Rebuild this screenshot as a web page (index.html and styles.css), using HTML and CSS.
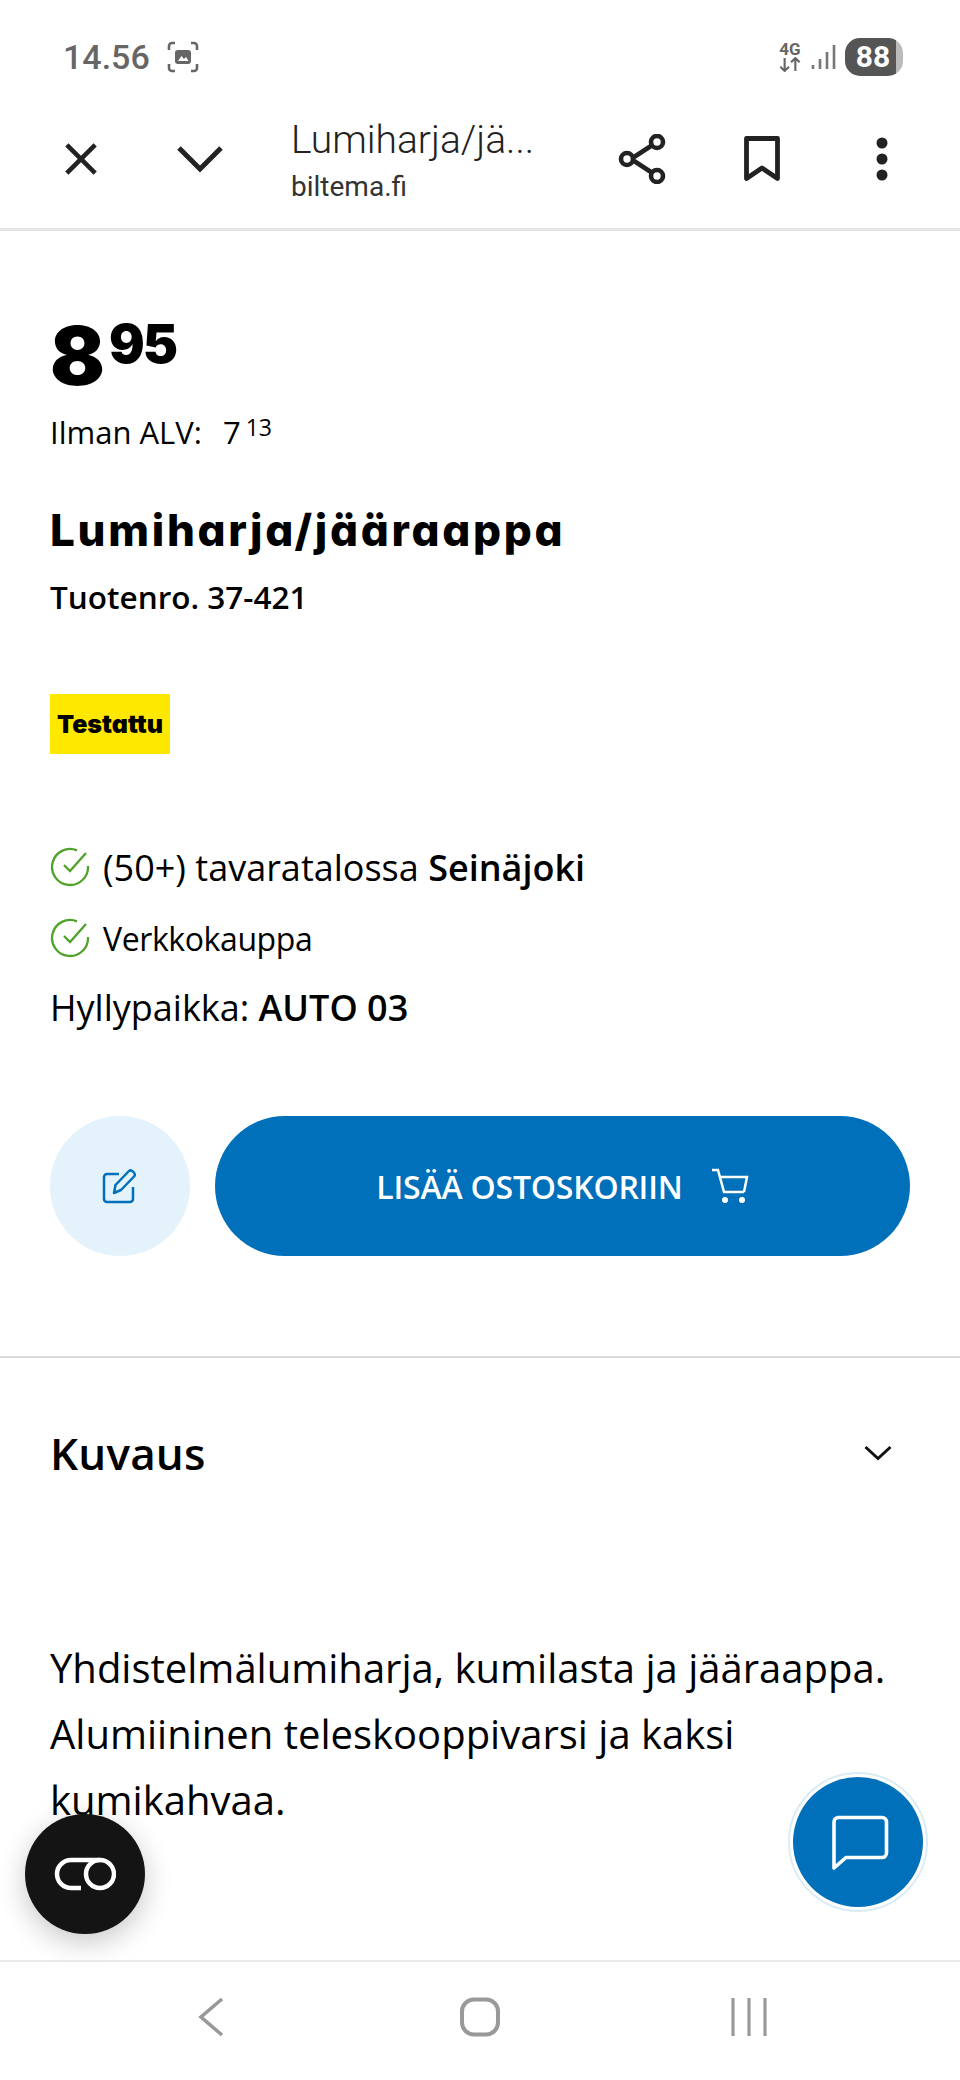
FILE: index.html
```html
<!DOCTYPE html>
<html lang="fi">
<head>
<meta charset="utf-8">
<title>Lumiharja/jääraappa</title>
<link rel="stylesheet" href="styles.css">
</head>
<body>
<div class="phone">
  <header class="status">
    <div class="status-left">
      <span class="time">14.56</span>
      <svg class="shot" viewBox="0 0 32 32"><path d="M8 2H5a3 3 0 0 0-3 3v4M24 2h3a3 3 0 0 1 3 3v4M8 30H5a3 3 0 0 1-3-3v-4M24 30h3a3 3 0 0 0 3-3v-4" fill="none" stroke="#666" stroke-width="2.6"/><rect x="8" y="9" width="16" height="14" rx="3" fill="#666"/><path d="M11 20l3.500-5 2.500 3 2-2 2.500 4z" fill="#fff"/></svg>
    </div>
    <div class="status-right">
      <div class="net"><span class="net-label">4G</span>
        <svg class="net-arrows" viewBox="0 0 22 14"><path d="M6 1v12M2 9l4 4 4-4M16 13V1M12 5l4-4 4 4" fill="none" stroke="#666" stroke-width="2"/></svg>
      </div>
      <svg class="signal" viewBox="0 0 26 28"><path d="M2 22v4M9 16v10M16 9v17M23 2v24" stroke="#777" stroke-width="2.600" fill="none"/></svg>
      <div class="battery"><span>88</span></div>
    </div>
  </header>

  <nav class="toolbar">
    <svg class="tb-icon close" viewBox="0 0 36 36"><path d="M3 3l30 30M33 3L3 33" stroke="#222" stroke-width="4.800" fill="none"/></svg>
    <svg class="tb-icon chev" viewBox="0 0 46 28"><path d="M2 3l21 21L44 3" stroke="#222" stroke-width="5" fill="none"/></svg>
    <div class="tb-title">
      <div class="tb-name">Lumiharja/jä...</div>
      <div class="tb-host">biltema.fi</div>
    </div>
    <svg class="tb-icon share" viewBox="0 0 48 50"><path d="M13 25L36 10M13 25l23 15" stroke="#222" stroke-width="4.600" fill="none"/><circle cx="9" cy="25" r="6" fill="#fff" stroke="#222" stroke-width="4.600"/><circle cx="39" cy="8" r="6" fill="#fff" stroke="#222" stroke-width="4.600"/><circle cx="39" cy="42" r="6" fill="#fff" stroke="#222" stroke-width="4.600"/></svg>
    <svg class="tb-icon mark" viewBox="0 0 36 46"><path d="M2.500 2.500h31v40L18 32 2.500 42.500z" stroke="#222" stroke-width="4.800" fill="none" stroke-linejoin="round"/></svg>
    <svg class="tb-icon dots" viewBox="0 0 12 44"><circle cx="6" cy="6" r="5.500" fill="#222"/><circle cx="6" cy="22" r="5.500" fill="#222"/><circle cx="6" cy="38" r="5.500" fill="#222"/></svg>
  </nav>

  <main class="page">
    <section class="product">
      <div class="price"><span class="euros">8</span><span class="cents">95</span></div>
      <div class="vat"><span>Ilman ALV:</span><span class="vat-val">7<span class="vat-c">13</span></span></div>
      <h1 class="name">Lumiharja/jääraappa</h1>
      <div class="sku">Tuotenro. 37-421</div>
      <div class="badge">Testattu</div>

      <div class="stock stock-store">
        <svg class="check" viewBox="0 0 40 40"><path d="M27 3.400A18 18 0 1 0 38 19" fill="none" stroke="#4fa32a" stroke-width="2.300"/><path d="M14 18l6 6L36 6" fill="none" stroke="#4fa32a" stroke-width="2.300"/></svg>
        <span>(50+) tavaratalossa <b>Seinäjoki</b></span>
      </div>
      <div class="stock stock-web">
        <svg class="check" viewBox="0 0 40 40"><path d="M27 3.400A18 18 0 1 0 38 19" fill="none" stroke="#4fa32a" stroke-width="2.300"/><path d="M14 18l6 6L36 6" fill="none" stroke="#4fa32a" stroke-width="2.300"/></svg>
        <span>Verkkokauppa</span>
      </div>
      <div class="shelf">Hyllypaikka: <b>AUTO 03</b></div>

      <div class="actions">
        <button class="note" type="button">
          <svg viewBox="0 0 36 36"><path d="M17 6H5a3 3 0 0 0-3 3v22a3 3 0 0 0 3 3h23a3 3 0 0 0 3-3V19" fill="none" stroke="#0070ba" stroke-width="2.500"/><path d="M12 25l1.500-8L27 3c2-2 7 2 5.500 5L19 22z" fill="none" stroke="#0070ba" stroke-width="2.500" stroke-linejoin="round"/></svg>
        </button>
        <button class="add" type="button">
          <span>LISÄÄ OSTOSKORIIN</span>
          <svg viewBox="0 0 38 36"><path d="M1 2h6l6 22h20M9 9h27l-3 15" fill="none" stroke="#fff" stroke-width="2.500"/><circle cx="14" cy="32" r="3" fill="#fff"/><circle cx="31" cy="32" r="3" fill="#fff"/></svg>
        </button>
      </div>
    </section>

    <section class="desc">
      <div class="desc-head">
        <h2>Kuvaus</h2>
        <svg viewBox="0 0 28 16"><path d="M1.500 2L14 13.500 26.500 2" fill="none" stroke="#111" stroke-width="3"/></svg>
      </div>
      <p>Yhdistelmälumiharja, kumilasta ja jääraappa. Alumiininen teleskooppivarsi ja kaksi kumikahvaa.</p>
    </section>
  </main>

  <footer class="navbar">
    <svg class="nav-back" viewBox="0 0 28 40"><path d="M25 2L4 20l21 18" fill="none" stroke="#999" stroke-width="3.600"/></svg>
    <svg class="nav-home" viewBox="0 0 42 40"><rect x="3" y="2.500" width="36" height="35" rx="12" fill="none" stroke="#999" stroke-width="4"/></svg>
    <svg class="nav-recent" viewBox="0 0 36 40"><path d="M2 1v38M18 1v38M34 1v38" fill="none" stroke="#999" stroke-width="3.200"/></svg>
  </footer>

  <button class="fab-link" type="button">
    <svg viewBox="0 0 62 34"><path d="M27 31H17a14 14 0 0 1 0-28H46" fill="none" stroke="#fff" stroke-width="4.500"/><circle cx="46" cy="17" r="14" fill="none" stroke="#fff" stroke-width="4.500"/></svg>
  </button>
  <button class="fab-chat" type="button">
    <svg viewBox="0 0 58 56"><path d="M7 2.500h44a4.500 4.500 0 0 1 4.500 4.500v31a4.500 4.500 0 0 1-4.500 4.500H15L3 53V7a4.500 4.500 0 0 1 4-4.500z" fill="none" stroke="#fff" stroke-width="3.600" stroke-linejoin="round"/></svg>
  </button>
</div>
</body>
</html>
```

FILE: styles.css
```css
* { box-sizing: border-box; }
html, body { margin: 0; padding: 0; background: #fff; }
body { font-family: "Open Sans", "Noto Sans", sans-serif; color: #000; }
.phone { position: relative; width: 960px; height: 2080px; overflow: hidden; background: #fff; display: flex; flex-direction: column; }

.status { height: 100px; padding: 13px 57px 0 63px; display: flex; justify-content: space-between; align-items: center; flex: none; }
.status-left { display: flex; align-items: center; gap: 17px; }
.time { font: 500 34px "Roboto", sans-serif; color: #666; }
.shot { width: 32px; height: 32px; }
.status-right { display: flex; align-items: center; gap: 8px; }
.net { display: flex; flex-direction: column; align-items: center; width: 26px; }
.net-label { font: 700 17px/15px "Roboto", sans-serif; color: #666; }
.net-arrows { width: 24px; height: 15px; }
.signal { width: 26px; height: 28px; }
.battery { width: 58px; height: 38px; border-radius: 15px; background: linear-gradient(90deg, #555 0 88%, #bbb 88%); color: #fff; font: 700 30px/38px "Roboto", sans-serif; text-align: center; padding-right: 2px; }

.toolbar { height: 131px; flex: none; border-bottom: 3px solid #e4e4e6; display: flex; align-items: center; padding: 0 0 10px 64px; }
.tb-icon { flex: none; }
.close { width: 34px; height: 34px; }
.chev { width: 46px; height: 28px; margin-left: 79px; }
.tb-title { width: 327px; margin-left: 68px; padding-top: 6px; }
.tb-name { font: 300 39px/46px "Roboto", sans-serif; color: #222; }
.tb-host { font: 400 28px/40px "Roboto", sans-serif; color: #333; margin-top: 4px; }
.share { width: 48px; height: 50px; }
.mark { width: 36px; height: 46px; margin-left: 78px; }
.dots { width: 12px; height: 44px; margin-left: 96px; }

.page { flex: 1; min-height: 0; }
.product { padding: 85px 50px 0; height: 1127px; border-bottom: 2px solid #dcdcdc; }
.price { height: 80px; display: flex; align-items: flex-start; font-family: "Inter", sans-serif; font-weight: 900; }
.euros { font-size: 81px; line-height: 80px; letter-spacing: -2px; }
.cents { font-size: 53px; line-height: 56px; margin-left: 6px; letter-spacing: -2px; }
.vat { margin-top: 15px; font-size: 31px; line-height: 42px; display: flex; gap: 21px; }
.vat-val { display: flex; align-items: flex-start; }
.vat-c { font-size: 23px; line-height: 32px; margin-left: 5px; }
.name { margin: 49px 0 0; font: 800 44px/56px "Inter", sans-serif; font-feature-settings: "cv11" 1; letter-spacing: 2.700px; }
.sku { margin-top: 18px; font-size: 31.500px; font-weight: 600; line-height: 42px; }
.badge { margin-top: 76px; width: 120px; height: 60px; background: #ffe800; font: 900 25px/60px "Inter", sans-serif; font-feature-settings: "cv11" 1; text-align: center; }
.stock { display: flex; align-items: center; gap: 13px; font-size: 36px; }
.stock b { font-weight: 600; }
.stock-store { margin-top: 91px; height: 44px; }
.stock-web { margin-top: 27px; height: 44px; font-size: 32px; letter-spacing: -.4px; }
.check { width: 40px; height: 40px; flex: none; }
.shelf { margin-top: 24px; font-size: 36px; line-height: 48px; }
.shelf b { font-weight: 600; }
.actions { display: flex; gap: 25px; margin-top: 84px; }
button { border: 0; padding: 0; font-family: inherit; }
.note { width: 140px; height: 140px; border-radius: 50%; background: #e4f3fb; display: flex; align-items: center; justify-content: center; }
.note svg { width: 36px; height: 36px; }
.add { width: 695px; height: 140px; border-radius: 70px; background: #0070ba; color: #fff; display: flex; align-items: center; justify-content: center; gap: 28px; font-size: 32px; font-weight: 600; letter-spacing: -.2px; }
.add svg { width: 38px; height: 36px; }

.desc { padding: 0 50px; }
.desc-head { display: flex; justify-content: space-between; align-items: center; margin-top: 67px; height: 56px; padding-right: 18px; }
.desc-head h2 { margin: 0; font-size: 44px; font-weight: 600; letter-spacing: .2px; }
.desc-head svg { width: 28px; height: 16px; }
.desc p { margin: 154px 0 0; font-size: 40px; line-height: 66px; width: 850px; }

.navbar { height: 120px; flex: none; background: #fff; border-top: 2px solid #ebebeb; position: relative; z-index: 1; display: flex; align-items: center; justify-content: space-between; padding: 0 193px 8px 197px; }
.nav-back { width: 28px; height: 40px; }
.nav-home { width: 42px; height: 40px; margin-left: 4px; }
.nav-recent { width: 36px; height: 40px; }

.fab-link { position: absolute; left: 25px; top: 1814px; width: 120px; height: 120px; border-radius: 50%; background: #141414; box-shadow: 0 8px 28px rgba(0,0,0,.22); display: flex; align-items: center; justify-content: center; z-index: 2; }
.fab-link svg { width: 62px; height: 34px; }
.fab-chat { position: absolute; left: 793px; top: 1777px; width: 130px; height: 130px; border-radius: 50%; background: #0070ba; outline: 2px solid #dcecf5; outline-offset: 3px; display: flex; align-items: center; justify-content: center; z-index: 2; padding: 2px 0 0 3px; }
.fab-chat svg { width: 58px; height: 56px; }
```
